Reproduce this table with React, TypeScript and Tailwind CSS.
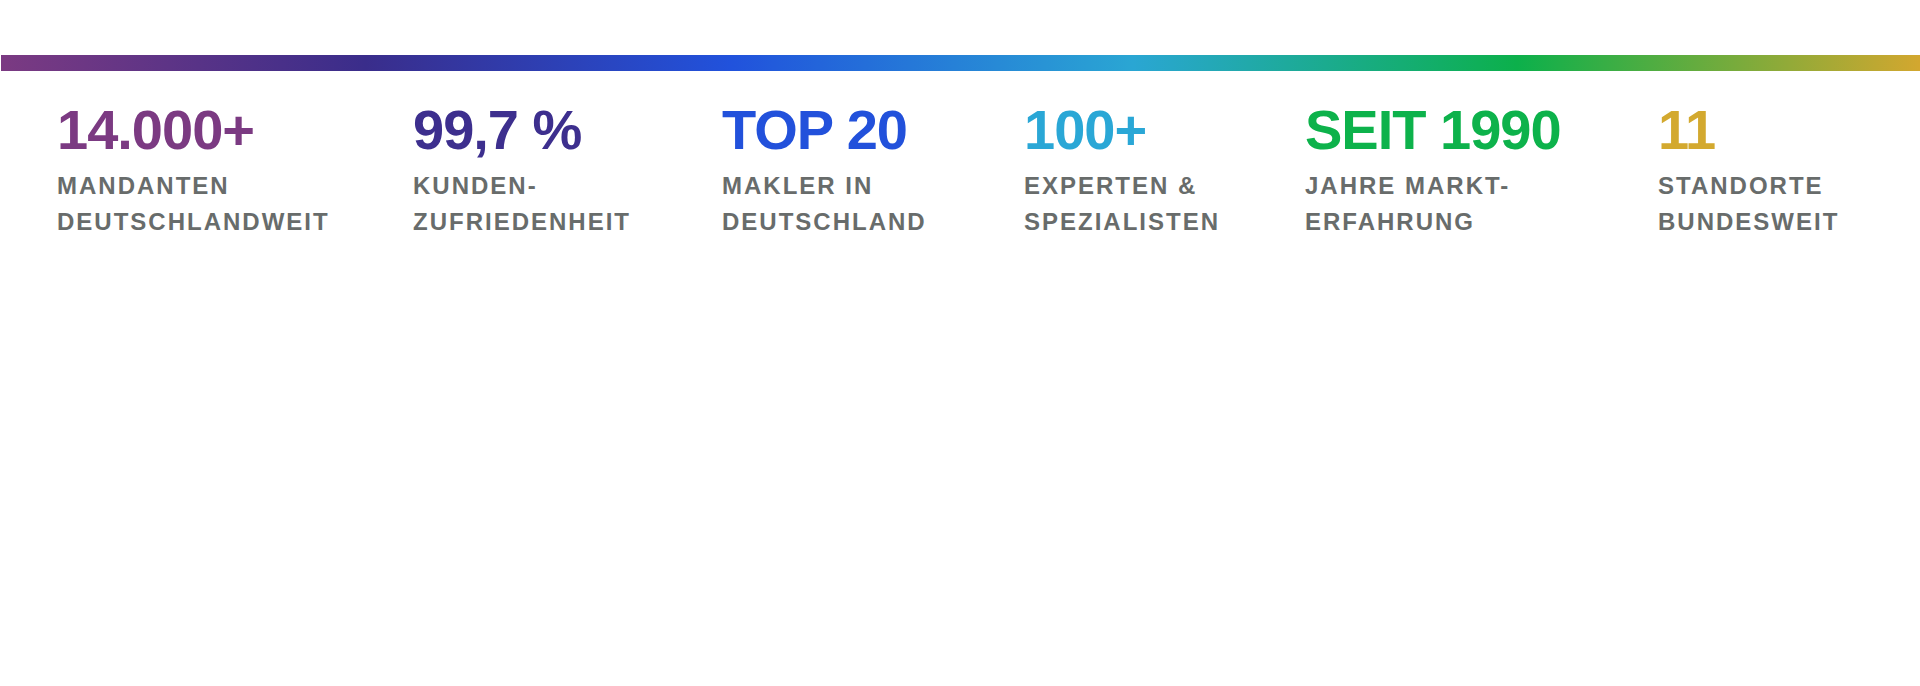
import React from "react";

type Stat = { value: string; lines: string[]; color: string };

const stats: Stat[] = [
  { value: "14.000+", lines: ["MANDANTEN", "DEUTSCHLANDWEIT"], color: "text-[#7b3a82]" },
  { value: "99,7 %", lines: ["KUNDEN-", "ZUFRIEDENHEIT"], color: "text-[#3d2f8e]" },
  { value: "TOP 20", lines: ["MAKLER IN", "DEUTSCHLAND"], color: "text-[#2251db]" },
  { value: "100+", lines: ["EXPERTEN &", "SPEZIALISTEN"], color: "text-[#2aa7d6]" },
  { value: "SEIT 1990", lines: ["JAHRE MARKT-", "ERFAHRUNG"], color: "text-[#0db24b]" },
  { value: "11", lines: ["STANDORTE", "BUNDESWEIT"], color: "text-[#d3a92f]" },
];

export default function App() {
  return (
    <div className="min-h-[686px] w-full bg-white font-['Liberation_Sans',Arial,sans-serif]">
      <div className="pt-[55px]">
        <div className="ml-px h-4 bg-[linear-gradient(90deg,#7b3a82_0%,#3a2d8b_19%,#2152dc_38%,#2aa6d3_59%,#0cb04b_79%,#d3a72f_100%)]" />
      </div>
      <div className="grid grid-cols-[356px_309px_302px_281px_353px_1fr] pl-[57px] pt-[31px]">
        {stats.map((s) => (
          <div key={s.value} className="flex flex-col">
            <div className={`text-[56px] leading-[56px] font-bold tracking-[-1px] whitespace-nowrap ${s.color}`}>
              {s.value}
            </div>
            <div className="mt-[10px] text-[24px] leading-[36px] font-bold tracking-[2px] text-[#686c6b] whitespace-nowrap">
              {s.lines.map((l) => (
                <div key={l}>{l}</div>
              ))}
            </div>
          </div>
        ))}
      </div>
    </div>
  );
}
